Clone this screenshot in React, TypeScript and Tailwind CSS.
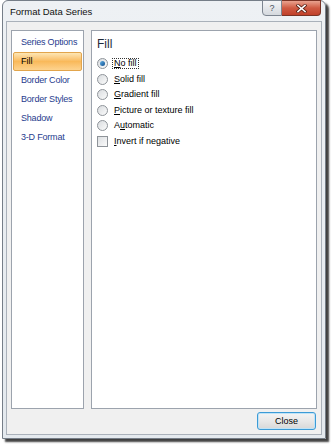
import React from "react";

const navItems = ["Series Options", "Fill", "Border Color", "Border Styles", "Shadow", "3-D Format"];

const fillOptions = [
  { pre: "", key: "N", post: "o fill", checked: true },
  { pre: "", key: "S", post: "olid fill", checked: false },
  { pre: "", key: "G", post: "radient fill", checked: false },
  { pre: "", key: "P", post: "icture or texture fill", checked: false },
  { pre: "A", key: "u", post: "tomatic", checked: false },
];

function Radio({ checked }: { checked: boolean }) {
  return (
    <span className="w-[11px] h-[11px] rounded-full border border-[#8e9399] bg-gradient-to-br from-[#d9dcdf] to-[#fbfbfb] flex items-center justify-center shrink-0">
      {checked && (
        <span className="w-[5px] h-[5px] rounded-full bg-gradient-to-br from-[#5fb0e6] to-[#10508f]" />
      )}
    </span>
  );
}

export default function App() {
  return (
    <div className="w-[332px] h-[446px] bg-white pl-[2px] font-['Liberation_Sans',Arial,sans-serif]">
      <div className="w-[324px] h-[439px] border border-[#767e88] rounded-t-[6px] bg-gradient-to-b from-[#eef1f4] to-[#e4e9ee] flex flex-col px-[3px] pb-[3px] shadow-[3px_3px_2px_rgba(0,0,0,0.75)]">
        {/* title bar */}
        <div className="h-[20px] flex items-start justify-between">
          <span className="text-[9.5px] text-[#111] pl-[4px] pt-[6px] leading-none">Format Data Series</span>
          <div className="flex mr-[1px] -mt-[1px]">
            <div className="w-[20px] h-[16px] border border-[#7d8590] rounded-bl-[4px] bg-gradient-to-b from-[#f4f5f7] to-[#d5d9de] flex items-center justify-center text-[9px] text-[#4a5360] leading-none">
              ?
            </div>
            <div className="w-[39px] h-[16px] border border-l-0 border-[#7a3325] rounded-br-[4px] bg-gradient-to-b from-[#e8a28f] via-[#cf5a42] to-[#c0402a] flex items-center justify-center">
              <svg width="11" height="9" viewBox="0 0 11 9">
                <path d="M2 1.5 L9 7.5 M9 1.5 L2 7.5" stroke="#5a2418" strokeWidth="3.2" strokeLinecap="square" />
                <path d="M2 1.5 L9 7.5 M9 1.5 L2 7.5" stroke="#ffffff" strokeWidth="1.6" strokeLinecap="square" />
              </svg>
            </div>
          </div>
        </div>

        {/* client area */}
        <div className="flex-1 bg-[#f0f0f0] border border-[#aab1ba] flex flex-col pt-[8px] pl-[4px] pr-[4px] pb-[4px]">
          <div className="flex gap-[7px] h-[379px]">
            {/* nav */}
            <div className="w-[73px] border border-[#9ca3ad] bg-white pt-[2px] px-[1px] flex flex-col">
              {navItems.map((item) =>
                item === "Fill" ? (
                  <div
                    key={item}
                    className="h-[19px] flex items-center pl-[7px] text-[9px] text-black border border-[#e2a54c] rounded-[2px] bg-gradient-to-b from-[#fde6b4] via-[#f9b95a] to-[#fdd38e]"
                  >
                    {item}
                  </div>
                ) : (
                  <div key={item} className="h-[19px] flex items-center pl-[8px] text-[9px] tracking-[-0.2px] text-[#1f3c8e]">
                    {item}
                  </div>
                )
              )}
            </div>

            {/* content */}
            <div className="flex-1 border border-[#9ca3ad] bg-white pl-[5px] pt-[6px] flex flex-col">
              <div className="text-[12px] text-[#1e2a3a] leading-[14px] h-[19px]">Fill</div>
              <div className="flex flex-col">
                {fillOptions.map((o) => (
                  <div key={o.key} className="h-[15.5px] flex items-center gap-[5px]">
                    <Radio checked={o.checked} />
                    <span
                      className={`text-[9px] text-black leading-[9px] px-[1px] ${
                        o.checked ? "outline outline-1 outline-dotted outline-[#333]" : ""
                      }`}
                    >
                      {o.pre}
                      <span className="underline">{o.key}</span>
                      {o.post}
                    </span>
                  </div>
                ))}
                <div className="h-[15.5px] flex items-center gap-[5px]">
                  <span className="w-[11px] h-[11px] border border-[#8e9399] bg-gradient-to-br from-[#dcdfe2] to-[#fbfbfb] shrink-0" />
                  <span className="text-[9px] text-black leading-[9px] px-[1px]">
                    <span className="underline">I</span>nvert if negative
                  </span>
                </div>
              </div>
            </div>
          </div>

          <div className="flex justify-end mt-[3px] pr-[1px]">
            <button className="w-[59px] h-[18px] rounded-[3px] border border-[#3c9bd6] bg-gradient-to-b from-[#f4f4f4] via-[#e8e8e8] to-[#d8d8d8] shadow-[inset_0_0_0_1px_#bfe3f7] text-[9px] text-black leading-none">
              Close
            </button>
          </div>
        </div>
      </div>
    </div>
  );
}
